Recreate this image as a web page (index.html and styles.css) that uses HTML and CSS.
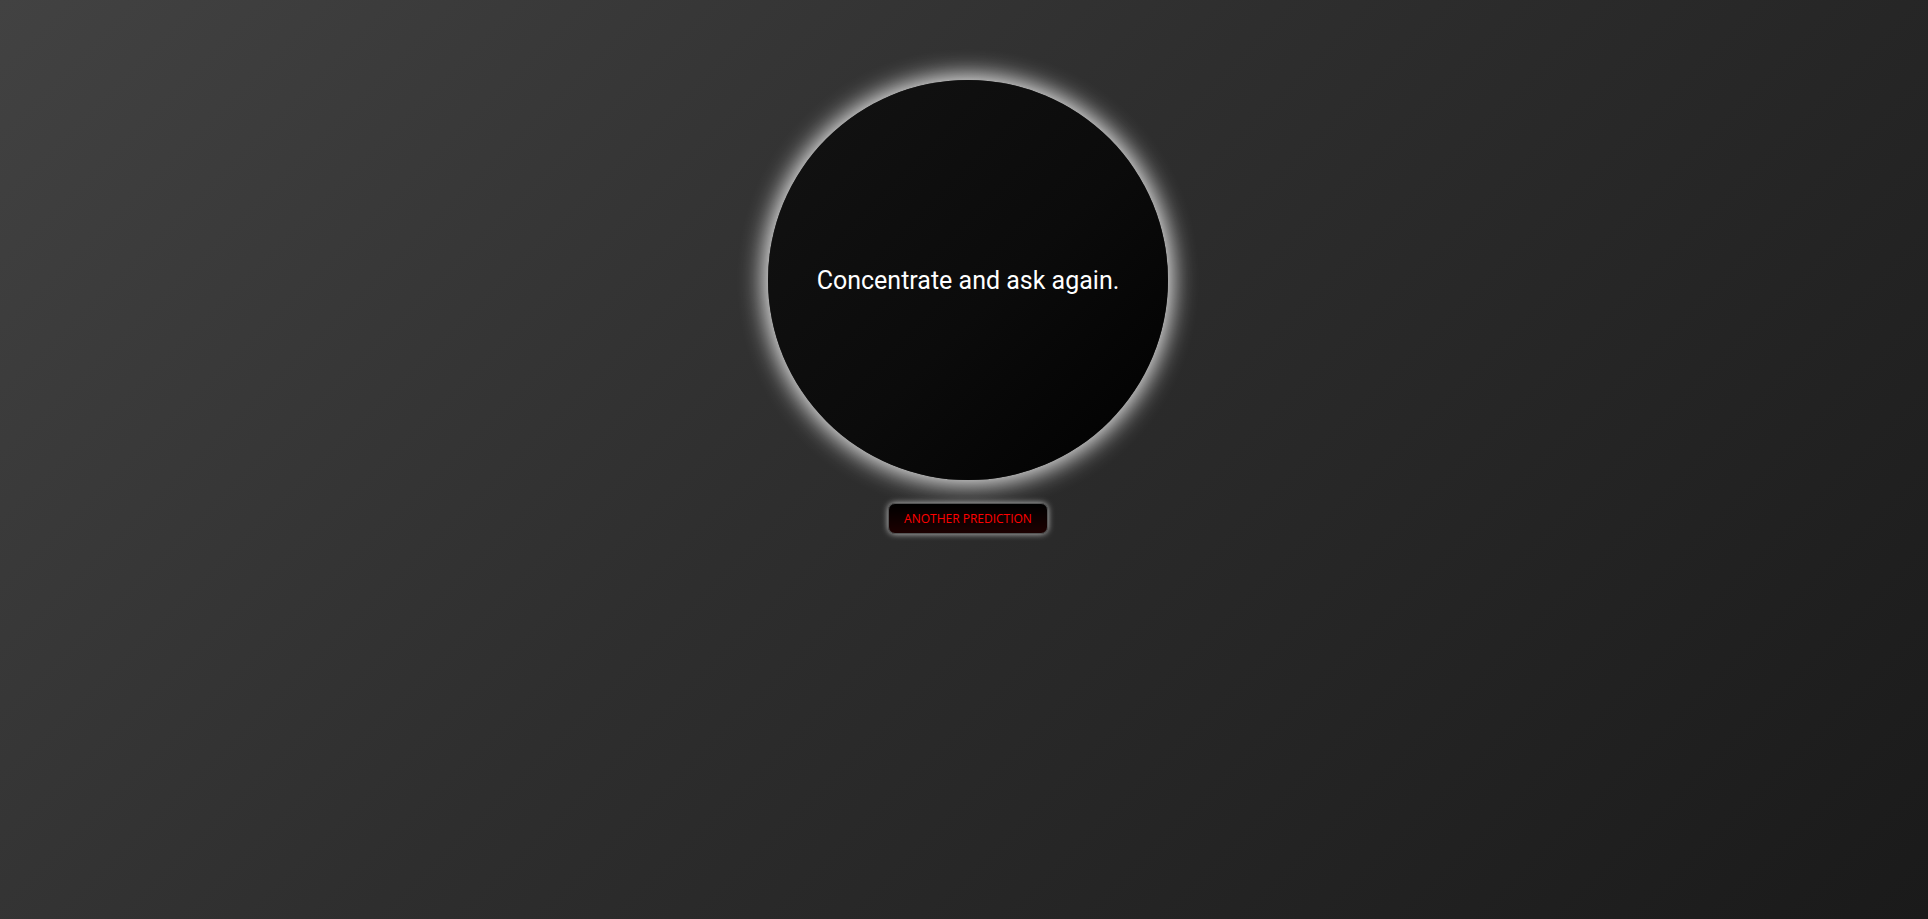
FILE: index.html
```html
<!DOCTYPE html>
<html>
<head>
<meta charset="utf-8">
<link rel="stylesheet" href="styles.css">
</head>
<body>
<main class="app">
  <div class="ball">
    <p class="answer">Concentrate and ask again.</p>
  </div>
  <button class="btn">Another Prediction</button>
</main>
</body>
</html>
```
FILE: styles.css
```css
html, body {
  margin: 0;
  height: 100%;
}
body {
  background: linear-gradient(135deg, #424242 0%, #2e2e2e 45%, #1a1a1a 100%);
  font-family: Roboto, "Liberation Sans", sans-serif;
  overflow: hidden;
}
.app {
  display: flex;
  flex-direction: column;
  align-items: center;
  padding: 80px 0 0 8px;
}
.ball {
  width: 400px;
  height: 400px;
  border-radius: 50%;
  background: linear-gradient(135deg, #131313 0%, #0b0b0b 55%, #000 100%);
  box-shadow: 0 0 24px 4px rgba(255,255,255,0.95);
  display: flex;
  align-items: center;
  justify-content: center;
}
.answer {
  margin: 0;
  color: #fff;
  font-size: 25px;
  line-height: 1;
}
.btn {
  margin-top: 23px;
  width: 160px;
  height: 31px;
  border: 1px solid #555;
  border-radius: 7px;
  background: linear-gradient(180deg, #000 0%, #1c0000 100%);
  box-shadow: 0 0 6px rgba(255,255,255,0.7);
  color: #f00;
  font-family: "Open Sans", sans-serif;
  font-size: 12px;
  text-transform: uppercase;
  padding: 0;
}
```
